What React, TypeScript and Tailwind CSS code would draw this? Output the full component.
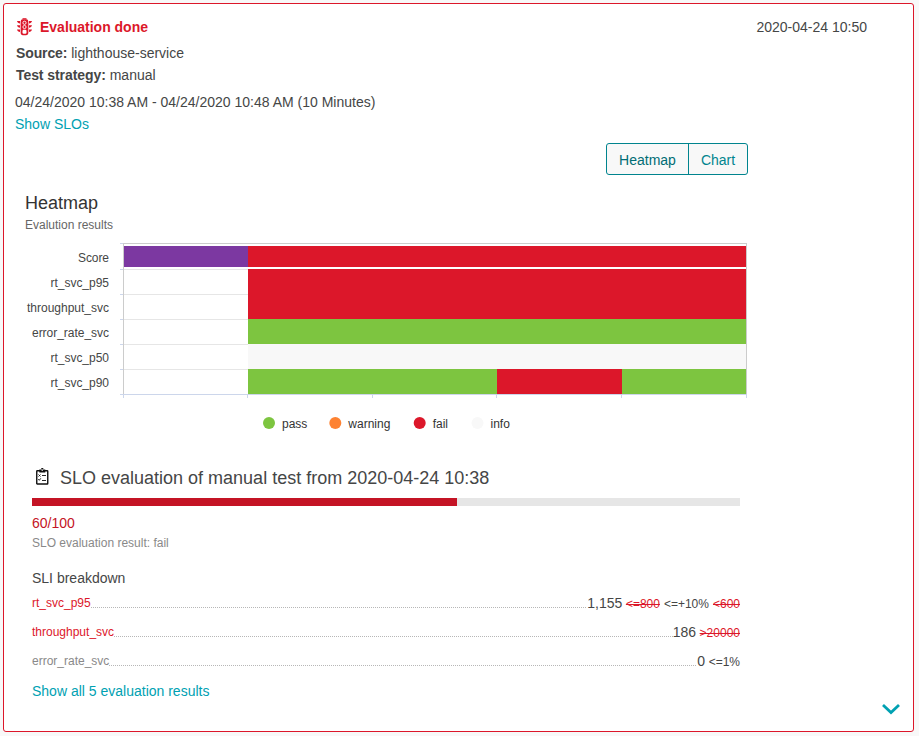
import React from "react";

const cells = [
  { x: 124, y: 246, w: 124, h: 21, c: "#7c38a1" },
  { x: 248, y: 246, w: 498, h: 21, c: "#dc172a" },
  { x: 248, y: 269, w: 498, h: 50, c: "#dc172a" },
  { x: 248, y: 319, w: 498, h: 25, c: "#7dc540" },
  { x: 248, y: 344, w: 498, h: 25, c: "#f8f8f8" },
  { x: 248, y: 369, w: 249, h: 25, c: "#7dc540" },
  { x: 497, y: 369, w: 125, h: 25, c: "#dc172a" },
  { x: 622, y: 369, w: 124, h: 25, c: "#7dc540" },
];
const rows = [
  { label: "Score", y: 262, w: 31 },
  { label: "rt_svc_p95", y: 287, w: 58.5 },
  { label: "throughput_svc", y: 312, w: 82 },
  { label: "error_rate_svc", y: 337, w: 77 },
  { label: "rt_svc_p50", y: 362, w: 58.5 },
  { label: "rt_svc_p90", y: 387, w: 58.5 },
];
const legend = [
  { label: "pass", x: 269, c: "#7dc540" },
  { label: "warning", x: 335.3, c: "#fd8232" },
  { label: "fail", x: 419.7, c: "#dc172a" },
  { label: "info", x: 477.5, c: "#f8f8f8" },
];

function HeatmapChart() {
  return (
    <svg width="740" height="264" viewBox="15 182 740 264" className="block shrink-0" shapeRendering="auto">
      <text x="25" y="209" fontSize="18" fill="#333333" textLength="73">Heatmap</text>
      <text x="25" y="229" fontSize="12" fill="#666666" textLength="88">Evalution results</text>
      <g shapeRendering="crispEdges">
        {[269, 294, 319, 344, 369].map((y) => (
          <rect key={y} x="124" y={y} width="622" height="1" fill="#e6e6e6" />
        ))}
        {cells.map((r, i) => (
          <rect key={i} x={r.x} y={r.y} width={r.w} height={r.h} fill={r.c} />
        ))}
        <rect x="123" y="243" width="624" height="1" fill="#cccccc" />
        <rect x="123" y="243" width="1" height="151" fill="#cccccc" />
        <rect x="746" y="243" width="1" height="151" fill="#cccccc" />
        <rect x="123" y="394" width="624" height="1" fill="#ccd6eb" />
        {[243, 269, 294, 319, 344, 369, 394].map((y) => (
          <rect key={y} x="120" y={y} width="3" height="1" fill="#ccd6eb" />
        ))}
        {[123, 247, 372, 496, 621, 746].map((x) => (
          <rect key={x} x={x} y="395" width="1" height="3" fill="#ccd6eb" />
        ))}
      </g>
      {rows.map((r) => (
        <text key={r.label} x={109 - r.w} y={r.y} fontSize="12" fill="#454646" textLength={r.w}>{r.label}</text>
      ))}
      {legend.map((l) => (
        <g key={l.label}>
          <circle cx={l.x} cy="423" r="6" fill={l.c} />
          <text x={l.x + 13} y="428" fontSize="12" fill="#333333">{l.label}</text>
        </g>
      ))}
    </svg>
  );
}

function TrafficLight() {
  return (
    <svg width="16" height="18" viewBox="0 0 16 18" className="block" fill="none" stroke="#dc172a">
      <path d="M5.500 0.800h4" strokeWidth="1.200" />
      <path d="M0 3h3v2.500C1.500 5.300 0.300 4.400 0 3zM15 3h-3v2.500c1.500-.2 2.700-1.100 3-2.500zM0 7.300h3v2.500C1.500 9.600 0.300 8.700 0 7.300zM15 7.300h-3v2.500c1.500-.2 2.700-1.100 3-2.500zM0 11.600h3v2.500c-1.500-.2-2.700-1.100-3-2.500zM15 11.600h-3v2.500c1.500-.2 2.700-1.100 3-2.500z" fill="#dc172a" stroke="none" />
      <rect x="4.300" y="2" width="6.400" height="14.600" rx="1.500" strokeWidth="1.300" fill="#dc172a" />
      <circle cx="7.500" cy="4.800" r="1.600" stroke="#fff" strokeWidth="0.900" />
      <circle cx="7.500" cy="9" r="1.600" stroke="#fff" strokeWidth="0.900" />
      <rect x="5.500" y="11.700" width="4" height="4.100" rx="1.200" fill="#fff" stroke="none" />
    </svg>
  );
}

function Checklist() {
  return (
    <svg width="13" height="17" viewBox="0 0 13 17" className="block" fill="none" stroke="#111">
      <rect x="0.750" y="2.750" width="11" height="13.200" rx="0.500" strokeWidth="1.400" />
      <path d="M3.300 1.500h6v3h-6z" fill="#111" stroke="none" />
      <path d="M5.300 0.500h2" />
      <path d="M5.700 2.500h1" stroke="#fff" />
      <path d="M2.500 6.500l2 2m0-2l-2 2M6 7.500h4M2.300 11l1 1.300 1.500-2M6 12.500h4" strokeWidth="0.900" />
    </svg>
  );
}

function Sli({ name, nameClass, value, children }: { name: string; nameClass: string; value: string; children: React.ReactNode }) {
  return (
    <div className="mb-[9px] flex h-5 items-start text-[12px] leading-5">
      <span className={nameClass}>{name}</span>
      <span className="mt-[14px] h-px flex-1 bg-[repeating-linear-gradient(90deg,#b7b7b7_0_1px,transparent_1px_2px)]" />
      <span className="mr-[3.500px] text-[14px] text-[#454646]">{value}</span>
      <span className="flex gap-1 whitespace-nowrap pt-px text-[#454646]">{children}</span>
    </div>
  );
}

export default function App() {
  return (
    <div className="h-[736px] w-[919px] bg-[#f8f8f8] p-[3px] font-['Liberation_Sans',Arial,sans-serif] text-[14px] text-[#454646]">
      <div className="flex h-[729px] w-[911px] flex-col rounded-[3px] border border-[#dc172a] bg-white pl-[11px]">
        <div className="flex h-[38px] w-[852px] shrink-0 items-start pt-[13px] leading-5">
          <div className="ml-[2px] mt-px"><TrafficLight /></div>
          <span className="ml-[7px] font-bold tracking-[-0.01px] text-[#dc172a]">Evaluation done</span>
          <span className="ml-auto">2020-04-24 10:50</span>
        </div>
        <div className="ml-px h-[22px] shrink-0 leading-[22px]"><b className="tracking-[-0.12px]">Source:</b> lighthouse-service</div>
        <div className="ml-px h-[22px] shrink-0 leading-[22px]"><b className="tracking-[-0.07px]">Test strategy:</b> manual</div>
        <div className="mt-[5px] h-[22px] shrink-0 leading-[22px]">04/24/2020 10:38 AM - 04/24/2020 10:48 AM (10 Minutes)</div>
        <div className="h-[22px] shrink-0 leading-[22px] text-[#00a1b2]">Show SLOs</div>
        <div className="ml-[591px] mt-[8px] flex h-8 w-[142px] shrink-0 overflow-hidden rounded-[3px] border border-[#00848e] bg-[#f8f8f8] text-center leading-8">
          <div className="w-[82px] border-r border-[#00848e] text-[#006d75]">Heatmap</div>
          <div className="flex-1 text-[#00848e]">Chart</div>
        </div>
        <div className="mt-[7px] shrink-0"><HeatmapChart /></div>
        <div className="ml-[17px] flex w-[708px] shrink-0 flex-col pt-[18px]">
          <div className="flex h-[34px] items-start pl-[3.500px]">
            <div className="mt-1"><Checklist /></div>
            <span className="ml-[11.500px] text-[18px] leading-7">SLO evaluation of manual test from 2020-04-24 10:38</span>
          </div>
          <div className="h-2 bg-[#e6e6e6]"><div className="h-2 w-[425px] bg-[#c41425]" /></div>
          <div className="mt-[7px] h-5 leading-5 text-[#c41425]">60/100</div>
          <div className="h-5 text-[12px] leading-5 text-[#898989]">SLO evaluation result: fail</div>
          <div className="mt-[15px] h-5 leading-5">SLI breakdown</div>
          <div className="mt-[5px]">
            <Sli name="rt_svc_p95" nameClass="text-[#dc172a]" value="1,155">
              <s className="text-[#dc172a]">&lt;=800</s><span>&lt;=+10%</span><s className="text-[#dc172a]">&lt;600</s>
            </Sli>
            <Sli name="throughput_svc" nameClass="text-[#dc172a]" value="186">
              <s className="text-[#dc172a]">&gt;20000</s>
            </Sli>
            <Sli name="error_rate_svc" nameClass="text-[#898989]" value="0">
              <span>&lt;=1%</span>
            </Sli>
          </div>
          <div className="mt-px h-5 leading-5 text-[#00a1b2]">Show all 5 evaluation results</div>
        </div>
        <svg width="20" height="14" viewBox="0 0 20 14" className="ml-auto mr-[12px] mt-px block shrink-0">
          <path d="M2 3l8 7.500L18 3" fill="none" stroke="#00a1b2" strokeWidth="2.800" />
        </svg>
      </div>
    </div>
  );
}
